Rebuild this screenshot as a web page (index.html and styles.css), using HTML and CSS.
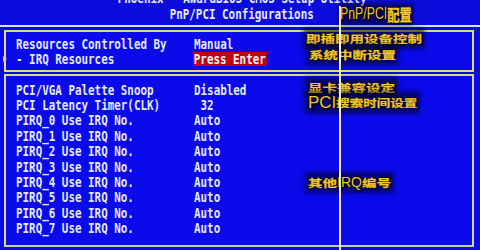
FILE: index.html
```html
<!DOCTYPE html>
<html lang="zh-CN">
<head>
<meta charset="utf-8">
<title>PnP/PCI Configurations</title>
<link rel="stylesheet" href="styles.css">
</head>
<body>
<div class="screen">
  <header class="head">
    <div class="head-inner">
      <div class="title"><span class="m">Phoenix - AwardBIOS CMOS Setup Utility</span></div>
      <div class="title"><span class="m">PnP/PCI Configurations</span></div>
    </div>
  </header>
  <div class="rule"></div>

  <section class="box box1">
    <div class="row"><span class="lab"><span class="m">Resources Controlled By</span></span><span class="val"><span class="m">Manual</span></span></div>
    <div class="row"><span class="lab"><span class="m">- IRQ Resources</span></span><span class="val"><span class="m hl">Press Enter</span></span></div>
    <i class="marker"></i>
  </section>

  <section class="box box2">
    <div class="row"><span class="lab"><span class="m">PCI/VGA Palette Snoop</span></span><span class="val"><span class="m">Disabled</span></span></div>
    <div class="row"><span class="lab"><span class="m">PCI Latency Timer(CLK)</span></span><span class="val"><span class="m"> 32</span></span></div>
    <div class="row"><span class="lab"><span class="m">PIRQ_0 Use IRQ No.</span></span><span class="val"><span class="m">Auto</span></span></div>
    <div class="row"><span class="lab"><span class="m">PIRQ_1 Use IRQ No.</span></span><span class="val"><span class="m">Auto</span></span></div>
    <div class="row"><span class="lab"><span class="m">PIRQ_2 Use IRQ No.</span></span><span class="val"><span class="m">Auto</span></span></div>
    <div class="row"><span class="lab"><span class="m">PIRQ_3 Use IRQ No.</span></span><span class="val"><span class="m">Auto</span></span></div>
    <div class="row"><span class="lab"><span class="m">PIRQ_4 Use IRQ No.</span></span><span class="val"><span class="m">Auto</span></span></div>
    <div class="row"><span class="lab"><span class="m">PIRQ_5 Use IRQ No.</span></span><span class="val"><span class="m">Auto</span></span></div>
    <div class="row"><span class="lab"><span class="m">PIRQ_6 Use IRQ No.</span></span><span class="val"><span class="m">Auto</span></span></div>
    <div class="row"><span class="lab"><span class="m">PIRQ_7 Use IRQ No.</span></span><span class="val"><span class="m">Auto</span></span></div>
  </section>

  <div class="vline"></div>

  <div class="note n1"><span class="la">PnP/PCI</span><span class="cj">配置</span></div>
  <div class="note n2"><span class="cj">即插即用设备控制</span></div>
  <div class="note n3"><span class="cj">系统中断设置</span></div>
  <div class="note n4"><span class="cj">显卡兼容设定</span></div>
  <div class="note n5"><span class="la">PCI</span><span class="cj">搜索时间设置</span></div>
  <div class="note n6"><span class="cj">其他</span><span class="la">IRQ</span><span class="cj">编号</span></div>
</div>
</body>
</html>
```

FILE: styles.css
```css
html, body {
  margin: 0;
  padding: 0;
}
body {
  background: #0a0aea;
  width: 480px;
  height: 250px;
  overflow: hidden;
}
.screen {
  position: relative;
  width: 480px;
  height: 250px;
  overflow: hidden;
  background: #0a0aea;
  color: #e4ecfc;
  font-family: "DejaVu Sans Mono", "Liberation Mono", monospace;
  font-weight: bold;
  font-size: 14px;
}
.m {
  display: inline-block;
  white-space: pre;
  transform: scaleX(0.777);
  transform-origin: 0 50%;
}
.head {
  height: 25px;
  overflow: hidden;
  background: #0c0cdc;
}
.head-inner {
  margin-top: -10.4px;
}
.title {
  height: 16px;
  line-height: 16px;
  text-align: center;
  padding-left: 4px;
}
.title .m {
  transform-origin: 50% 50%;
}
.rule {
  height: 2px;
  background: #d2e6f0;
}
.box {
  position: relative;
  margin: 3px 6px 0 4px;
  border: 2px solid #dcdc78;
  padding-left: 10px;
}
.box1 {
  padding-top: 4.7px;
  padding-bottom: 2.5px;
}
.box2 {
  margin-top: 2px;
  padding-top: 6.7px;
  padding-bottom: 8.3px;
  border-color: #d6da8a #cfd6a0 #c6d0a8 #d6da8a;
}
.row {
  display: grid;
  grid-template-columns: 178px 1fr;
  height: 15.4px;
  line-height: 15.4px;
}
.lab, .val {
  white-space: pre;
  overflow: visible;
}
.hl {
  background: #bc0414;
  color: #f4f4f4;
  line-height: 14px;
  padding: 0 1px;
  margin-left: -1px;
}
.marker {
  position: absolute;
  left: -3px;
  top: 24px;
  width: 0;
  height: 0;
  border-top: 3px solid transparent;
  border-bottom: 3px solid transparent;
  border-left: 4px solid #f0d040;
}
.vline {
  position: absolute;
  left: 339px;
  top: 6px;
  width: 2px;
  height: 244px;
  background: #f0eec8;
  z-index: 3;
}
.note {
  position: absolute;
  z-index: 2;
  color: #f2c72c;
  white-space: nowrap;
  line-height: 1;
  display: flex;
  align-items: center;
  background: rgba(0, 0, 24, 0.55);
  box-shadow: 0 0 4px 3px rgba(0, 0, 24, 0.55);
  text-shadow: 0 0 2px #000, 0 0 3px #000, 1px 1px 2px #000;
}
.note .cj {
  display: inline-block;
  font-family: "Noto Sans CJK SC", sans-serif;
  font-weight: bold;
  font-size: 14.5px;
  -webkit-text-stroke: 0.3px #f2c72c;
  transform: scaleY(0.74);
  transform-origin: 50% 50%;
}
.note .la {
  display: inline-block;
  font-family: "Liberation Sans", Arial, sans-serif;
  font-weight: normal;
}
.n1 {
  left: 340px;
  top: 6px;
  transform: scaleX(0.77);
  transform-origin: 0 0;
}
.n1 .la {
  font-size: 16px;
}
.n1 .cj {
  font-size: 16px;
  transform: none;
}
.n2 { left: 306px; top: 31px; }
.n3 { left: 309px; top: 47px; }
.n4 { left: 308px; top: 80px; }
.n5 { left: 308px; top: 94px; }
.n5 .la { font-size: 17px; }
.n5 .cj { font-size: 13.5px; }
.n6 { left: 308px; top: 175px; }
.n6 .la { font-size: 14px; }
```
